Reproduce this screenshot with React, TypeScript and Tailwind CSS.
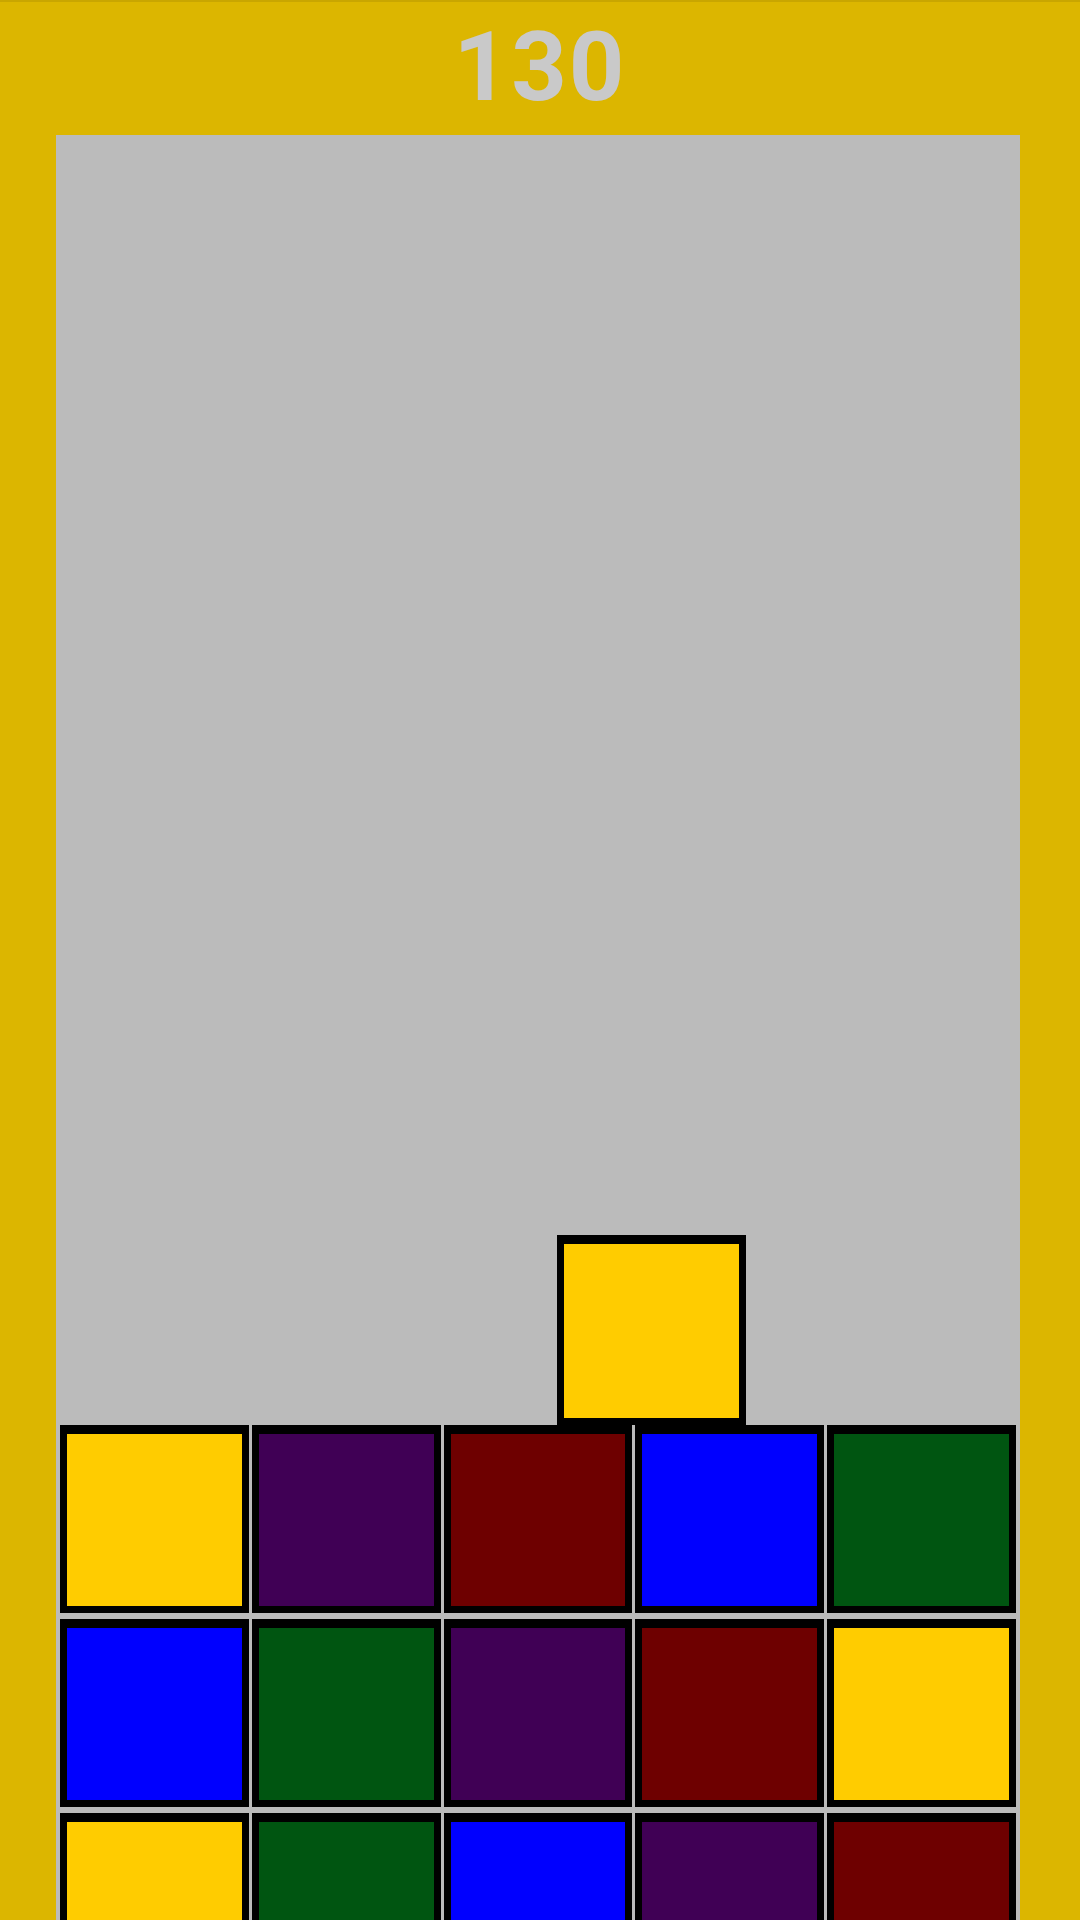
const colors = {
  yellow: 'bg-[#ffcc00]',
  purple: 'bg-[#400055]',
  red: 'bg-[#6e0000]',
  blue: 'bg-[#0000ff]',
  green: 'bg-[#005511]',
}

type Color = keyof typeof colors

const rows: Color[][] = [
  ['yellow', 'purple', 'red', 'blue', 'green'],
  ['blue', 'green', 'purple', 'red', 'yellow'],
  ['yellow', 'green', 'blue', 'purple', 'red'],
]

function Block({ color, className = '' }: { color: Color; className?: string }) {
  return (
    <div
      className={`box-border border-[7px] border-t-[9px] border-black ${colors[color]} ${className}`}
    />
  )
}

export default function App() {
  return (
    <div
      className="w-[1080px] h-[1920px] overflow-hidden bg-[#dcb600] border-t-2 border-[#c9a600] flex flex-col"
      style={{ fontFamily: 'Roboto, "Liberation Sans", sans-serif' }}
    >
      <header className="h-[133px] shrink-0 flex items-center justify-center">
        <span className="text-[97px] leading-none font-bold text-[#c9c9c9] tracking-[2px] -mt-[3px]">
          130
        </span>
      </header>

      <main className="ml-[56px] w-[964px] flex-1 min-h-0 bg-[#bbbbbb] flex flex-col">
        <div className="relative h-[1290px] shrink-0">
          <Block color="yellow" className="absolute left-[501px] bottom-0 w-[189px] h-[190px]" />
        </div>

        <div className="grid grid-cols-5 gap-x-[3px] gap-y-[6px] px-[4px] shrink-0">
          {rows.flatMap((row, r) =>
            row.map((c, i) => <Block key={`${r}-${i}`} color={c} className="h-[188px]" />)
          )}
        </div>
      </main>
    </div>
  )
}
